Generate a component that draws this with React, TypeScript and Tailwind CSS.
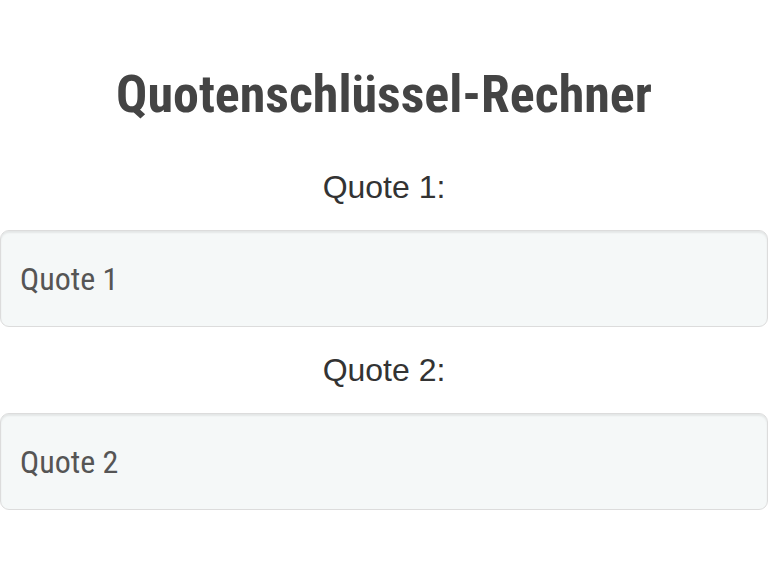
import React, { useState } from "react";

const condensed = { fontFamily: "Roboto, 'Liberation Sans', sans-serif" };

function QuoteField({ id, label, value, onChange }: { id: string; label: string; value: string; onChange: (v: string) => void }) {
  return (
    <div className="flex flex-col">
      <label
        htmlFor={id}
        className="my-[23px] block text-center text-[32px] leading-[40px] text-[#333]"
        style={{ fontFamily: "'Liberation Sans', Arial, sans-serif" }}
      >
        {label}:
      </label>
      <input
        id={id}
        type="text"
        inputMode="decimal"
        placeholder={label}
        value={value}
        onChange={(e) => onChange(e.target.value)}
        className="h-[97px] w-full rounded-[9px] border border-[#dcdcdc] bg-[#f5f8f8] pl-[19px] text-[32px] font-stretch-condensed text-[#555] shadow-[inset_0_2px_2px_rgba(0,0,0,0.07)] outline-none placeholder:text-[#555]"
        style={condensed}
      />
    </div>
  );
}

export default function App() {
  const [q1, setQ1] = useState("");
  const [q2, setQ2] = useState("");

  return (
    <div className="min-h-screen bg-white">
      <div className="pt-[63px]">
        <h1
          className="text-center text-[52px] font-bold font-stretch-condensed leading-[64px] text-[#444]"
          style={condensed}
        >
          Quotenschlüssel-Rechner
        </h1>
        <div className="mt-[17px]">
          <QuoteField id="q1" label="Quote 1" value={q1} onChange={setQ1} />
          <QuoteField id="q2" label="Quote 2" value={q2} onChange={setQ2} />
        </div>
      </div>
    </div>
  );
}
